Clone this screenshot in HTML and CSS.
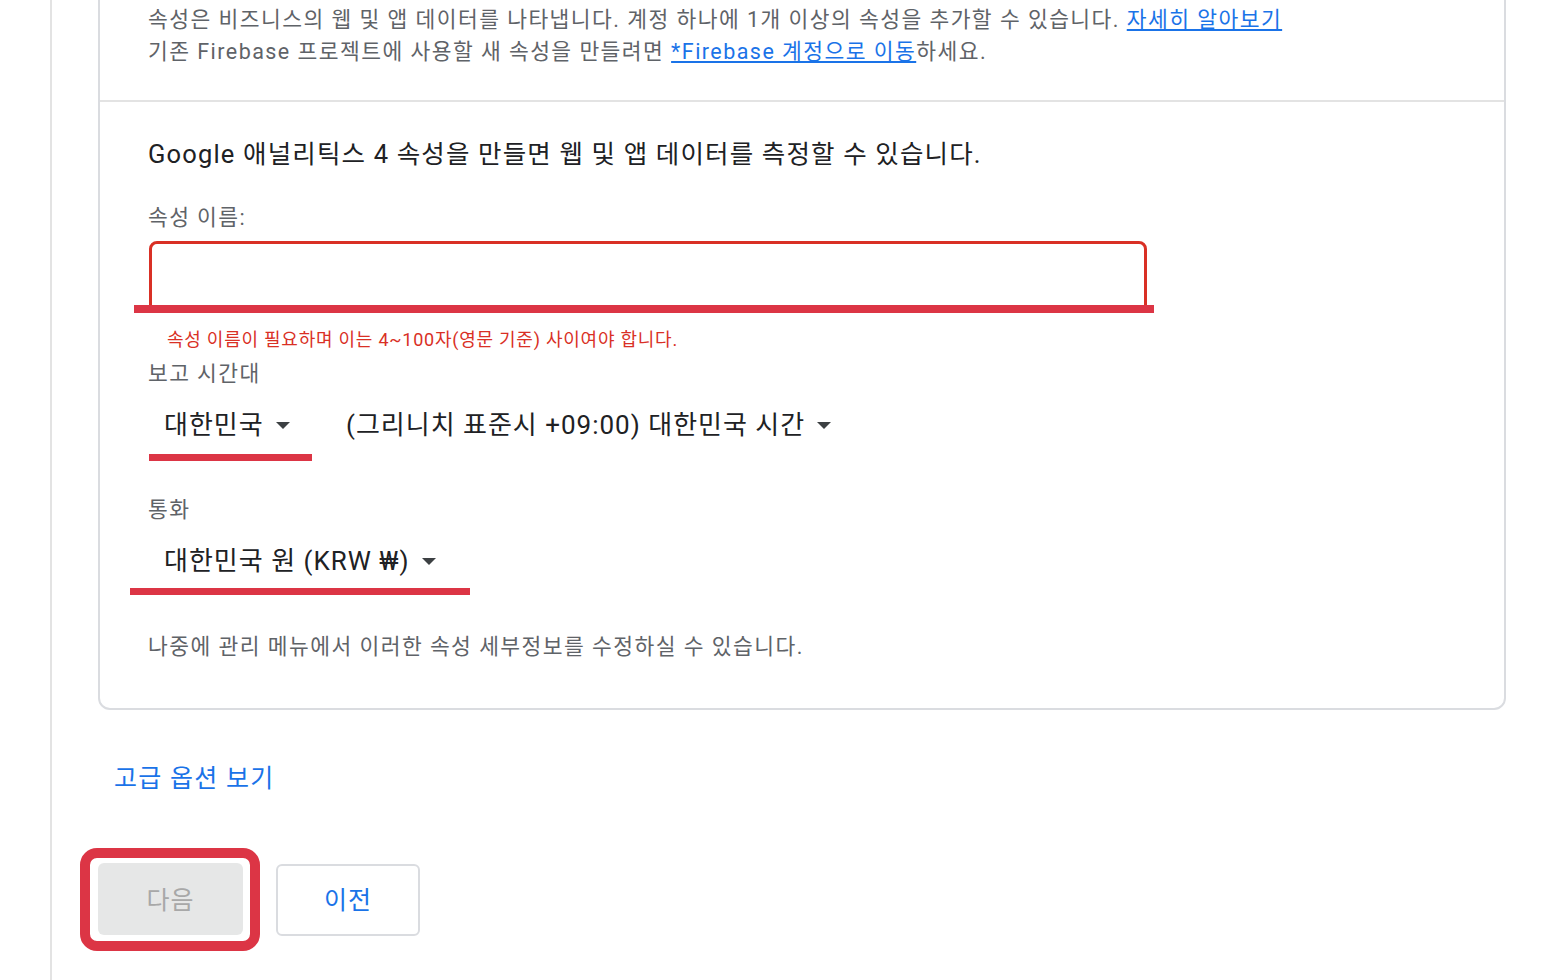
FILE: index.html
```html
<!DOCTYPE html>
<html lang="ko">
<head>
<meta charset="utf-8">
<title>속성 만들기</title>
<link rel="stylesheet" href="styles.css">
</head>
<body>
<div class="page">
  <div class="card">
    <div class="section intro">
      <p>속성은 비즈니스의 웹 및 앱 데이터를 나타냅니다. 계정 하나에 1개 이상의 속성을 추가할 수 있습니다. <a href="#">자세히 알아보기</a></p>
      <p>기존 Firebase 프로젝트에 사용할 새 속성을 만들려면 <a href="#">*Firebase 계정으로 이동</a>하세요.</p>
    </div>
    <div class="section form">
      <h2 class="heading">Google 애널리틱스 4 속성을 만들면 웹 및 앱 데이터를 측정할 수 있습니다.</h2>
      <div class="label">속성 이름:</div>
      <div class="input"><span class="mark-bar"></span></div>
      <div class="error">속성 이름이 필요하며 이는 4~100자(영문 기준) 사이여야 합니다.</div>
      <div class="label label-tz">보고 시간대</div>
      <div class="row">
        <div class="select select-country">대한민국<span class="caret"></span></div>
        <div class="select select-zone">(그리니치 표준시 +09:00) 대한민국 시간<span class="caret"></span></div>
      </div>
      <div class="label label-cur">통화</div>
      <div class="row">
        <div class="select select-currency">대한민국 원 (KRW ₩)<span class="caret"></span></div>
      </div>
      <div class="note">나중에 관리 메뉴에서 이러한 속성 세부정보를 수정하실 수 있습니다.</div>
    </div>
  </div>
  <div class="advanced">고급 옵션 보기</div>
  <div class="actions">
    <div class="mark-box"><button class="btn btn-next" disabled>다음</button></div>
    <button class="btn btn-prev">이전</button>
  </div>
</div>
</body>
</html>
```

FILE: styles.css
```css
* { box-sizing: border-box; }
html, body { margin: 0; padding: 0; background: #fff; }
body {
  font-family: Roboto, "Noto Sans CJK KR", sans-serif;
  color: #5f6368;
  overflow: hidden;
  height: 980px;
}
.page {
  margin-left: 50px;
  border-left: 2px solid #e3e3e3;
  padding: 0 50px 0 46px;
  min-height: 1022px;
}
.card {
  margin-top: -42px;
  border: 2px solid #dadce0;
  border-radius: 12px;
  background: #fff;
}
.section { padding-left: 48px; padding-right: 48px; }
.intro { padding-top: 44px; padding-bottom: 32px; }
.intro p {
  margin: 0;
  font-size: 21.5px;
  line-height: 32px;
  letter-spacing: 1.45px;
  color: #5f6368;
}
.intro a { color: #1a73e8; text-decoration: underline; }
.form {
  border-top: 2px solid #e3e3e3;
  padding-top: 36px;
  padding-bottom: 46px;
}
.heading {
  margin: 0;
  font-weight: 400;
  font-size: 25.5px;
  line-height: 32px;
  letter-spacing: 1.17px;
  color: #202124;
}
.label {
  font-size: 21.5px;
  line-height: 30px;
  letter-spacing: 1.4px;
  color: #5f6368;
  margin-top: 33px;
}
.input {
  position: relative;
  margin-top: 8px;
  margin-left: 1px;
  width: 998px;
  height: 70px;
  border: 3px solid #d93025;
  border-radius: 8px 8px 0 0;
}
.mark-bar {
  position: absolute;
  left: -18px;
  right: -10px;
  top: 61px;
  height: 8px;
  background: #dc3545;
}
.error {
  margin-top: 17px;
  padding-left: 19px;
  font-size: 18px;
  line-height: 24px;
  letter-spacing: 0.76px;
  color: #d93025;
}
.label-tz { margin-top: 7px; }
.label-cur { margin-top: 34px; }
.row { display: flex; align-items: flex-start; margin-top: 20px; }
.select {
  display: flex;
  align-items: center;
  font-size: 26px;
  line-height: 32px;
  letter-spacing: 1px;
  color: #202124;
  border-bottom: 7px solid transparent;
}
.caret {
  display: inline-block;
  width: 0;
  height: 0;
  margin-left: 12px;
  border-left: 7px solid transparent;
  border-right: 7px solid transparent;
  border-top: 7px solid #3c4043;
}
.select-country {
  margin-left: 1px;
  width: 163px;
  padding-left: 15px;
  padding-bottom: 13px;
  border-bottom-color: #dc3545;
}
.select-zone { margin-left: 34px; padding-bottom: 13px; }
.select-currency {
  margin-left: -18px;
  width: 340px;
  padding-left: 34px;
  padding-bottom: 11px;
  border-bottom-color: #dc3545;
}
.note {
  margin-top: 37px;
  font-size: 21.5px;
  line-height: 30px;
  letter-spacing: 1.45px;
  color: #5f6368;
}
.advanced {
  margin-top: 53px;
  padding-left: 16px;
  font-size: 25px;
  line-height: 32px;
  letter-spacing: 1.25px;
  color: #1a73e8;
}
.actions {
  display: flex;
  align-items: center;
  margin-top: 53px;
}
.mark-box {
  margin-left: -18px;
  border: 10px solid #dc3545;
  border-radius: 17px;
  padding: 5px 7px 6px 8px;
}
.btn {
  width: 145px;
  height: 72px;
  border-radius: 6px;
  font-family: Roboto, "Noto Sans CJK KR", sans-serif;
  font-size: 25px;
  letter-spacing: 1px;
  padding: 0 0 3px 0;
}
.btn-next {
  background: #e6e7e7;
  border: none;
  color: #a8a8a8;
}
.btn-prev {
  margin-left: 16px;
  width: 144px;
  background: #fff;
  border: 2px solid #dadce0;
  color: #1a73e8;
}
```
